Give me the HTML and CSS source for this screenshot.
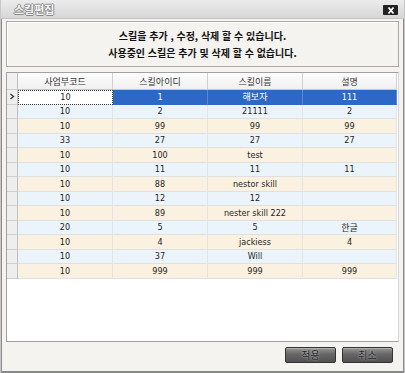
FILE: index.html
```html
<!DOCTYPE html>
<html lang="ko">
<head>
<meta charset="utf-8">
<link rel="stylesheet" href="styles.css">
</head>
<body>
<div class="window">
  <div class="titlebar">
    <span class="title">스킬편집</span>
    <span class="close"><svg width="14" height="9" viewBox="0 0 14 9"><path d="M4.5 1.5 L9.5 7.5 M9.5 1.5 L4.5 7.5" stroke="#fff" stroke-width="1.8"/></svg></span>
  </div>
  <div class="info">
    <p>스킬을 추가 , 수정, 삭제 할 수 있습니다.</p>
    <p>사용중인 스킬은 추가 및 삭제 할 수 없습니다.</p>
  </div>
  <div class="grid">
    <div class="row head">
      <div class="rh"></div><div class="c">사업부코드</div><div class="c">스킬아이디</div><div class="c">스킬이름</div><div class="c">설명</div>
    </div>
    <div class="row sel">
      <div class="rh"><svg width="6" height="7" viewBox="0 0 6 7"><path d="M1.5 1 L4.5 3.5 L1.5 6" fill="none" stroke="#333" stroke-width="1.3"/></svg></div><div class="c focus">10</div><div class="c">1</div><div class="c">해보자</div><div class="c">111</div>
    </div>
    <div class="row a"><div class="rh"></div><div class="c">10</div><div class="c">2</div><div class="c">21111</div><div class="c">2</div></div>
    <div class="row b"><div class="rh"></div><div class="c">10</div><div class="c">99</div><div class="c">99</div><div class="c">99</div></div>
    <div class="row a"><div class="rh"></div><div class="c">33</div><div class="c">27</div><div class="c">27</div><div class="c">27</div></div>
    <div class="row b"><div class="rh"></div><div class="c">10</div><div class="c">100</div><div class="c">test</div><div class="c"></div></div>
    <div class="row a"><div class="rh"></div><div class="c">10</div><div class="c">11</div><div class="c">11</div><div class="c">11</div></div>
    <div class="row b"><div class="rh"></div><div class="c">10</div><div class="c">88</div><div class="c">nestor skill</div><div class="c"></div></div>
    <div class="row a"><div class="rh"></div><div class="c">10</div><div class="c">12</div><div class="c">12</div><div class="c"></div></div>
    <div class="row b"><div class="rh"></div><div class="c">10</div><div class="c">89</div><div class="c">nester skill 222</div><div class="c"></div></div>
    <div class="row a"><div class="rh"></div><div class="c">20</div><div class="c">5</div><div class="c">5</div><div class="c">한글</div></div>
    <div class="row b"><div class="rh"></div><div class="c">10</div><div class="c">4</div><div class="c">jackiess</div><div class="c">4</div></div>
    <div class="row a"><div class="rh"></div><div class="c">10</div><div class="c">37</div><div class="c">Will</div><div class="c"></div></div>
    <div class="row b"><div class="rh"></div><div class="c">10</div><div class="c">999</div><div class="c">999</div><div class="c">999</div></div>
  </div>
  <div class="footer">
    <button class="btn">적용</button>
    <button class="btn">취소</button>
  </div>
</div>
</body>
</html>
```
FILE: styles.css
```css
* { box-sizing: border-box; }
html, body { margin: 0; padding: 0; background: #fff; }
body { font-family: "DejaVu Sans Condensed", "Liberation Sans", "Noto Sans CJK KR", sans-serif; font-size: 9px; color: #222; }
.window {
  width: 405px; height: 373px;
  background: #f4f3ef;
  border-left: 1px solid #c8c8c8;
  border-right: 1px solid #c8c8c8;
  display: flex; flex-direction: column;
  padding: 0 2px 2px 2px;
  box-shadow: inset 1px 0 0 #8a8a8a, inset -1px 0 0 #8a8a8a, inset 0 -2px 0 #8a8a8a;
}
.titlebar {
  height: 19px; margin: 0 -2px;
  background: linear-gradient(#ececec, #d6d6d6);
  display: flex; align-items: center; justify-content: space-between;
  padding: 0 6px 0 13px;
  border-bottom: 1px solid #c4c4c4;
}
.title {
  font-family: "Noto Sans CJK KR", sans-serif; font-weight: bold; font-size: 11px;
  color: #f4f4f4;
  text-shadow: -1px 0 #8a8a8a, 1px 0 #8a8a8a, 0 1px #8a8a8a, 0 -1px #8a8a8a;
}
.close {
  width: 15px; height: 10px; background: #222; border-radius: 1px;
  display: flex; align-items: center; justify-content: center;
  margin-top: 2px;
}
.close svg { display: block; }
.info {
  margin: 2px 3px 0 3px; height: 46px;
  border: 1px solid #a9a9a9;
  box-shadow: inset 1px 1px 0 #fff;
  display: flex; flex-direction: column; align-items: center; justify-content: center; gap: 6px;
  font-family: "Noto Sans CJK KR", sans-serif; font-size: 10px; font-weight: bold; color: #111;
}
.info p { margin: 0; line-height: 11px; }
.grid {
  margin: 5px 3px 0 3px; height: 270px;
  background: #fff;
  border: 1px solid #a0a0a0;
  border-right-color: #d8d8d8;
  padding-right: 3px;
}
.row { display: grid; grid-template-columns: 11px 95px 95px 95px 94px; height: 14.5px; }
.row .c {
  display: flex; align-items: center; justify-content: center;
  border-right: 1px solid #e4e4e4; border-bottom: 1px solid #e0e0e0;
  white-space: nowrap; overflow: hidden;
  color: #1e1e1e;
}
.rh {
  background: #eeeeee;
  border-right: 1px solid #c0c0c0; border-bottom: 1px solid #cfcfcf;
  display: flex; align-items: center; justify-content: center;
}
.row.head { height: 17px; }
.row.head .c {
  background: linear-gradient(#fdfdfd, #f0f0f0);
  border-right: 1px solid #d0d0d0; border-bottom: 1px solid #c6c6c6;
  font-family: "Noto Sans CJK KR", sans-serif; font-size: 9px; color: #333;
}
.row.head .rh { background: #f0f0f0; }
.row.a .c { background: #ecf4fb; }
.row.b .c { background: #fbf1e1; }
.row.sel .c { background: #2e68c6; color: #fff; border-right-color: #5a86d2; border-bottom-color: #2e68c6; }
.row.sel .c.focus { background: #fff; color: #222; border: 1px dotted #333; }
.footer {
  flex: 1; display: flex; justify-content: flex-end; align-items: center; gap: 6px;
  padding: 0 9px 4px 0;
}
.btn {
  width: 51px; height: 16px;
  border: 1px solid #333; border-radius: 2px;
  background: linear-gradient(#959595, #666 45%, #525252);
  box-shadow: inset 0 1px 0 #b0b0b0;
  color: #262626; font-family: "Noto Sans CJK KR", sans-serif; font-size: 10px;
  padding: 0; line-height: 14px;
  text-shadow: 0 0 2px #d4d4d4;
}
```
